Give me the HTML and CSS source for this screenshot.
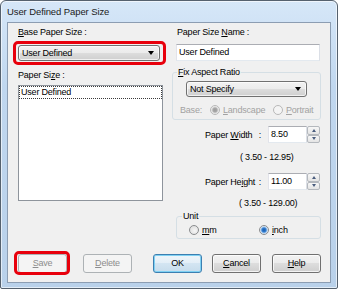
FILE: index.html
```html
<!DOCTYPE html>
<html lang="en">
<head>
  <meta charset="UTF-8">
  <title>User Defined Paper Size</title>
  <link rel="stylesheet" href="styles.css">
</head>
<body>
  <div class="window">
    <div class="titlebar">User Defined Paper Size</div>

    <div class="client">
      <div class="col-left">
        <div class="label"><u>B</u>ase Paper Size :</div>
        <div class="mark mark-combo">
          <div class="combo combo-base">User Defined<span class="arrow"></span></div>
        </div>
        <div class="label label-list">Paper Si<u>z</u>e :</div>
        <div class="listbox">
          <div class="list-item">User Defined</div>
        </div>
      </div>

      <div class="col-right">
        <div class="label label-name">Paper Size <u>N</u>ame :</div>
        <div class="textbox textbox-name">User Defined</div>

        <div class="group group-aspect">
          <div class="group-title"><u>F</u>ix Aspect Ratio</div>
          <div class="combo combo-aspect">Not Specify<span class="arrow"></span></div>
          <div class="radio-row base-row disabled">
            <span class="base-label">Base:</span>
            <span class="opt opt-land"><span class="radio checked"></span><span><u>L</u>andscape</span></span>
            <span class="opt"><span class="radio"></span><span><u>P</u>ortrait</span></span>
          </div>
        </div>

        <div class="field-row row-width">
          <span class="field-label"><span>Paper <u>W</u>idth</span><span>:</span></span>
          <div class="textbox num">8.50</div>
          <div class="spin"><span class="spin-up"></span><span class="spin-down"></span></div>
        </div>
        <div class="range range-width">( 3.50 - 12.95)</div>

        <div class="field-row row-height">
          <span class="field-label"><span>Paper He<u>i</u>ght</span><span>:</span></span>
          <div class="textbox num">11.00</div>
          <div class="spin"><span class="spin-up"></span><span class="spin-down"></span></div>
        </div>
        <div class="range range-height">( 3.50 - 129.00)</div>

        <div class="group group-unit">
          <div class="group-title">Unit</div>
          <div class="radio-row unit-row">
            <span class="opt opt-mm"><span class="radio"></span><span><u>m</u>m</span></span>
            <span class="opt"><span class="radio checked"></span><span><u>i</u>nch</span></span>
          </div>
        </div>
      </div>

      <div class="footer">
        <div class="mark mark-save">
          <div class="btn btn-disabled"><u>S</u>ave</div>
        </div>
        <div class="btn btn-disabled btn-delete"><u>D</u>elete</div>
        <div class="btn btn-default btn-ok">OK</div>
        <div class="btn btn-cancel"><u>C</u>ancel</div>
        <div class="btn btn-help"><u>H</u>elp</div>
      </div>
    </div>
  </div>
</body>
</html>
```

FILE: styles.css
```css
* {
  margin: 0;
  padding: 0;
  box-sizing: border-box;
}

body {
  font-family: 'Liberation Sans', Arial, sans-serif;
  font-size: 9px;
  letter-spacing: -0.2px;
  color: #000;
  background-color: #fff;
  width: 338px;
  height: 289px;
  overflow: hidden;
}

u {
  text-decoration: underline;
  text-underline-offset: 1px;
}

.window {
  width: 338px;
  height: 289px;
  border: 1px solid #55616e;
  border-radius: 6px 6px 2px 2px;
  background: linear-gradient(#d6e7f8, #c0d7ef 30%, #b9d1ea);
  box-shadow: inset 0 0 0 1px rgba(255,255,255,0.6);
  padding: 0 6px 5px 6px;
  display: flex;
  flex-direction: column;
}

.titlebar {
  height: 21px;
  line-height: 22px;
  font-size: 9.5px;
  letter-spacing: -0.1px;
  color: #1b1b1b;
}

.client {
  flex: 1;
  border: 1px solid #8c9db2;
  background-color: #f0f0f0;
  display: grid;
  grid-template-columns: 145px 149px;
  grid-template-rows: auto 1fr;
  column-gap: 9px;
  padding: 3px 9px 9px 10px;
  align-items: start;
}

.label {
  height: 12px;
  line-height: 12px;
  white-space: nowrap;
}

.label-list {
  margin-top: 8px;
}

.label-name {
  padding-left: 5px;
}

/* red annotation rectangles */
.mark {
  position: relative;
}

.mark::after {
  content: "";
  position: absolute;
  border: 3px solid #e8000c;
  border-radius: 5px;
}

.mark-combo {
  margin-top: 7px;
  width: 142px;
}

.mark-combo::after {
  inset: -4px -6px -4px -5px;
}

.mark-save::after {
  inset: -3px -3px -2px -4px;
}

/* combo boxes */
.combo {
  height: 16px;
  border: 1px solid #707070;
  border-radius: 3px;
  background: linear-gradient(#f2f2f2, #ebebeb 50%, #dddddd 50%, #cfcfcf);
  box-shadow: inset 0 0 0 1px rgba(255,255,255,0.7);
  display: flex;
  align-items: center;
  justify-content: space-between;
  padding: 0 5px 0 3px;
  line-height: 14px;
  white-space: nowrap;
}

.arrow {
  width: 0;
  height: 0;
  border-left: 3.5px solid transparent;
  border-right: 3.5px solid transparent;
  border-top: 4px solid #000;
}

.combo-aspect {
  width: 121px;
  margin: 3px 0 0 13px;
}

/* list box */
.listbox {
  margin-top: 4px;
  height: 116px;
  background-color: #fff;
  border: 1px solid #8e949c;
}

.list-item {
  height: 13px;
  line-height: 11px;
  padding-left: 1px;
  border: 1px dotted #3a3a3a;
}

/* text boxes */
.textbox {
  height: 17px;
  line-height: 15px;
  padding-left: 2px;
  background-color: #fff;
  border: 1px solid;
  border-color: #abadb3 #dbdfe6 #e3e9ef #e2e3ea;
  white-space: nowrap;
}

.textbox-name {
  width: 144px;
  margin: 6px 0 0 4px;
}

/* group boxes */
.group {
  border: 1px solid #d5dfe5;
  border-radius: 3px;
}

.group-title {
  width: fit-content;
  height: 12px;
  line-height: 12px;
  padding: 0 1px;
  background-color: #f0f0f0;
}

.group-aspect {
  margin-top: 11px;
  padding-bottom: 3px;
}

.group-aspect .group-title {
  margin: -7px 0 0 4px;
}

.group-unit {
  margin: 7px 0 0 4px;
  padding-bottom: 2px;
}

.group-unit .group-title {
  margin: -7px 0 0 5px;
}

/* radio rows */
.radio-row {
  height: 12px;
  display: flex;
  align-items: center;
  white-space: nowrap;
}

.base-row {
  margin-top: 7px;
  padding-left: 7px;
}

.disabled {
  color: #a2a2a2;
}

.base-label {
  width: 30px;
}

.opt {
  display: flex;
  align-items: center;
  gap: 3px;
}

.opt-land {
  width: 63px;
}

.unit-row {
  margin-top: 2px;
  padding-left: 12px;
}

.opt-mm {
  width: 70px;
}

.radio {
  width: 10px;
  height: 10px;
  border-radius: 50%;
  border: 1px solid #8a8c8e;
  background: radial-gradient(circle at 60% 60%, #f6f6f6, #d8d8d8);
}

.radio.checked {
  background: radial-gradient(circle, #1c5aa8 0, #2e7bd0 2px, #9cc2ea 3px, #eef3f8 4px);
}

.disabled .radio {
  border-color: #b8b8b8;
  background: #f4f4f4;
}

.disabled .radio.checked {
  background: radial-gradient(circle, #9c9c9c 0, #a8a8a8 2px, #d6d6d6 3px, #f4f4f4 4px);
}

/* numeric fields */
.field-row {
  height: 17px;
  display: flex;
  align-items: center;
}

.row-width {
  margin-top: 6px;
}

.row-height {
  margin-top: 10px;
}

.field-label {
  width: 56px;
  margin-left: 33px;
  display: flex;
  justify-content: space-between;
  white-space: nowrap;
}

.num {
  width: 39px;
  margin-left: 7px;
}

.spin {
  width: 13px;
  height: 17px;
  display: flex;
  flex-direction: column;
}

.spin span {
  flex: 1;
  border: 1px solid #b4b8bd;
  border-radius: 2px;
  background: linear-gradient(#f7f7f7, #e4e4e4);
  display: flex;
  align-items: center;
  justify-content: center;
}

.spin span::before {
  content: "";
  width: 0;
  height: 0;
  border-left: 2.5px solid transparent;
  border-right: 2.5px solid transparent;
}

.spin-up::before {
  border-bottom: 3px solid #4a5d7e;
}

.spin-down::before {
  border-top: 3px solid #4a5d7e;
}

.range {
  height: 12px;
  line-height: 12px;
  white-space: nowrap;
}

.range-width {
  margin-top: 8px;
  padding-left: 68px;
}

.range-height {
  margin-top: 7px;
  padding-left: 67px;
}

/* bottom buttons */
.footer {
  grid-column: 1 / -1;
  align-self: end;
  display: flex;
}

.btn {
  width: 49px;
  height: 19px;
  line-height: 17px;
  text-align: center;
  border: 1px solid #707070;
  border-radius: 3px;
  background: linear-gradient(#f2f2f2, #ebebeb 50%, #dddddd 50%, #cfcfcf);
  box-shadow: inset 0 0 0 1px rgba(255,255,255,0.75);
}

.btn-disabled {
  color: #8d8d8d;
  border-color: #adb2b5;
  background: #f4f4f4;
  box-shadow: none;
}

.btn-default {
  border-color: #3c7fb1;
  background: linear-gradient(#eef5fa, #e2eef7 50%, #d3e5f2 50%, #c6dcec);
  box-shadow: inset 0 0 0 1px #7fd1f3;
}

.btn-delete {
  margin-left: 16px;
}

.btn-ok {
  margin-left: 21px;
}

.btn-cancel {
  margin-left: 10px;
}

.btn-help {
  margin-left: 11px;
}
```
